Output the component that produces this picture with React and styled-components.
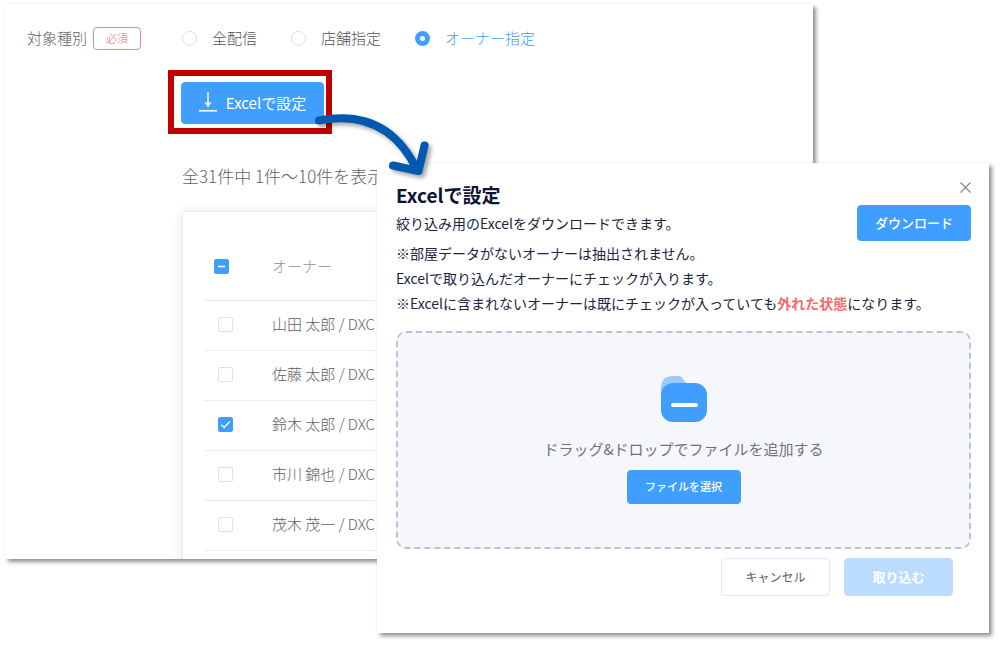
import { useEffect, useRef, useState } from "react";
import styled, { createGlobalStyle } from "styled-components";

const GlobalStyle = createGlobalStyle`
  * {
    box-sizing: border-box;
  }
  body {
    margin: 0;
    background-color: #fff;
    font-family: "Noto Sans CJK JP", "Noto Sans", sans-serif;
    font-size: 15px;
    line-height: 24px;
    color: #606266;
  }
  button, input {
    font-family: inherit;
    margin: 0;
  }
`;

const Container = styled.div`
  position: relative;
  min-height: 100vh;
  padding: 4px 187px 0 5px;
  overflow: hidden;
`;

const Page = styled.main`
  padding: 22px 0 0 22px;
  overflow: hidden;
  background-color: #fff;
  box-shadow: 3px 3px 4px rgba(0, 0, 0, 0.42), 0 0 2px rgba(0, 0, 0, 0.06);
`;

const TargetRow = styled.div`
  display: flex;
  align-items: center;
  height: 24px;
  font-weight: 300;
`;

const TargetLabel = styled.span`
  width: 66px;
`;

const Required = styled.span`
  width: 48px;
  height: 23px;
  margin-right: 41px;
  border: 1px solid #e58a8a;
  border-radius: 4px;
  color: #e06c6c;
  font-size: 11px;
  line-height: 21px;
  text-align: center;
`;

const RadioLabel = styled.label`
  display: flex;
  align-items: center;
  margin-right: 34px;
  color: ${(props) => (props.$active ? "#409eff" : "#505256")};
  font-weight: 300;
  cursor: pointer;
`;

const Radio = styled.input`
  appearance: none;
  width: 15px;
  height: 15px;
  margin-right: 15px;
  border: 1px solid #dcdfe6;
  border-radius: 50%;
  background-color: #fff;

  &:checked {
    border: 5px solid #409eff;
  }
`;

const Content = styled.div`
  margin-left: 141px;
  padding-top: 20px;
`;

const Highlight = styled.div`
  width: fit-content;
  padding: 6px 2px 4px 7px;
  border: 6px solid #c00000;
`;

const Button = styled.button`
  display: flex;
  align-items: center;
  justify-content: center;
  width: ${(props) => props.$width};
  height: ${(props) => props.$height};
  padding: 0 0 2px;
  border: 1px solid ${(props) => (props.$plain ? "#e4e7ed" : "#409eff")};
  border-radius: 4px;
  background-color: ${(props) => (props.$plain ? "#fff" : "#409eff")};
  color: ${(props) => (props.$plain ? "#606266" : "#fff")};
  font-size: ${(props) => props.$size};
  font-weight: ${(props) => props.$weight || 400};
  cursor: pointer;

  &:disabled {
    border-color: #bbdcff;
    background-color: #bbdcff;
    cursor: not-allowed;
  }
`;

const DownloadIcon = styled.svg`
  margin-right: 9px;
`;

const Count = styled.p`
  margin: 30px 0 23px 14px;
  font-size: 17px;
  font-weight: 300;
`;

const Card = styled.div`
  margin-left: 14px;
  margin-right: 20px;
  padding: 0 21px 8px;
  border: 1px solid #ebeef5;
  border-bottom: 0;
  border-radius: 4px 4px 0 0;
  box-shadow: 0 2px 12px rgba(0, 0, 0, 0.12);
`;

const Table = styled.table`
  width: 100%;
  border-collapse: separate;
  border-spacing: 0;
  table-layout: fixed;
  font-weight: 300;
`;

const CheckCol = styled.col`
  width: 68px;
`;

const Th = styled.th`
  height: 89px;
  padding: ${(props) => (props.$check ? "20px 0 0 10px" : "20px 0 0")};
  border-bottom: 1px solid #ebeef5;
  color: #909399;
  font-weight: 300;
  text-align: left;
`;

const Td = styled.td`
  height: 50px;
  padding: ${(props) => (props.$check ? "0 0 2px 14px" : "0 0 3px")};
  border-bottom: 1px solid #ebeef5;
`;

const CheckWrap = styled.span`
  display: grid;
  width: 15px;
  height: 15px;

  & > * {
    grid-area: 1 / 1;
  }

  & > svg {
    pointer-events: none;
  }
`;

const CheckInput = styled.input`
  appearance: none;
  width: 15px;
  height: 15px;
  border: 1px solid #dcdfe6;
  border-radius: 2px;
  background-color: #fff;
  cursor: pointer;

  &:checked,
  &:indeterminate {
    border-color: #409eff;
    background-color: #409eff;
  }
`;

const Modal = styled.section`
  position: absolute;
  top: 163px;
  left: 377px;
  right: 11px;
  padding: 18px 18px 37px 19px;
  background-color: #fff;
  color: #1b2440;
  font-size: 14px;
  line-height: 25px;
  box-shadow: 3px 3px 4px rgba(0, 0, 0, 0.42), 0 0 2px rgba(0, 0, 0, 0.06);
`;

const ModalHead = styled.header`
  display: flex;
  justify-content: space-between;
`;

const Title = styled.h2`
  margin: 0 0 2px;
  color: #0c1530;
  font-size: 19px;
  font-weight: 700;
  line-height: 28px;
`;

const Text = styled.p`
  margin: 0;
`;

const HeadActions = styled.div`
  display: flex;
  flex-direction: column;
  align-items: flex-end;
  gap: 10px;
`;

const CloseButton = styled.button`
  display: flex;
  padding: 0;
  border: 0;
  background: none;
  cursor: pointer;
`;

const Danger = styled.strong`
  color: #f56c6c;
  font-weight: 700;
`;

const DropZone = styled.div`
  display: flex;
  flex-direction: column;
  align-items: center;
  margin: 15px 0 9px;
  padding: 43px 0;
  border: 2px dashed #b8c5d8;
  border-radius: 10px;
  background-color: #f5f7fb;
`;

const DropText = styled.p`
  margin: 14px 0 9px;
  color: #707379;
  font-size: 15px;
`;

const ModalFooter = styled.footer`
  display: flex;
  justify-content: flex-end;
  gap: 14px;
  padding-right: 18px;
`;

const Arrow = styled.svg`
  position: absolute;
  top: 104px;
  left: 307px;
  filter: drop-shadow(3px 3px 2px rgba(0, 0, 0, 0.35));
  pointer-events: none;
`;

const targets = ["全配信", "店舗指定", "オーナー指定"];

const owners = [
  "山田 太郎 / DXC",
  "佐藤 太郎 / DXC",
  "鈴木 太郎 / DXC",
  "市川 錦也 / DXC",
  "茂木 茂一 / DXC",
];

const Checkbox = ({ label, checked, indeterminate, onChange }) => {
  const ref = useRef(null);

  useEffect(() => {
    ref.current.indeterminate = !!indeterminate;
  }, [indeterminate]);

  return (
    <CheckWrap>
      <CheckInput
        ref={ref}
        type="checkbox"
        aria-label={label}
        checked={checked}
        onChange={onChange}
      />
      <svg width="15" height="15" fill="none" stroke="#fff" strokeWidth="1.3">
        {indeterminate && <path d="M4 7.5h7" strokeWidth="1.6" />}
        {checked && !indeterminate && <path d="M3.2 7.6l3 2.9 5.6-6" />}
      </svg>
    </CheckWrap>
  );
};

const App = () => {
  const [target, setTarget] = useState("オーナー指定");
  const [selected, setSelected] = useState([2]);

  const toggle = (index) => {
    setSelected(
      selected.includes(index)
        ? selected.filter((i) => i !== index)
        : [...selected, index]
    );
  };

  const all = selected.length === owners.length;

  return (
    <Container>
      <GlobalStyle />
      <Page>
        <TargetRow role="radiogroup" aria-label="対象種別">
          <TargetLabel>対象種別</TargetLabel>
          <Required>必須</Required>
          {targets.map((item) => (
            <RadioLabel key={item} $active={target === item}>
              <Radio
                type="radio"
                name="target"
                checked={target === item}
                onChange={() => setTarget(item)}
              />
              {item}
            </RadioLabel>
          ))}
        </TargetRow>
        <Content>
          <Highlight>
            <Button $width="143px" $height="42px" $size="15px">
              <DownloadIcon width="18" height="20" fill="none" stroke="#f3efea">
                <path d="M9 0v14" strokeWidth="1.6" />
                <path d="M5.5 10.5h7L9 15.5z" fill="#f3efea" stroke="none" />
                <path d="M0 18.8h18" strokeWidth="1.8" />
              </DownloadIcon>
              Excelで設定
            </Button>
          </Highlight>
          <Count>全31件中 1件～10件を表示</Count>
          <Card>
            <Table>
              <colgroup>
                <CheckCol />
                <col />
              </colgroup>
              <thead>
                <tr>
                  <Th $check>
                    <Checkbox
                      label="すべて選択"
                      checked={all}
                      indeterminate={selected.length > 0 && !all}
                      onChange={() =>
                        setSelected(all ? [] : owners.map((_, i) => i))
                      }
                    />
                  </Th>
                  <Th>オーナー</Th>
                </tr>
              </thead>
              <tbody>
                {owners.map((owner, i) => (
                  <tr key={owner}>
                    <Td $check>
                      <Checkbox
                        label={owner}
                        checked={selected.includes(i)}
                        onChange={() => toggle(i)}
                      />
                    </Td>
                    <Td>{owner}</Td>
                  </tr>
                ))}
              </tbody>
            </Table>
          </Card>
        </Content>
      </Page>
      <Modal role="dialog" aria-labelledby="modal-title">
        <ModalHead>
          <div>
            <Title id="modal-title">Excelで設定</Title>
            <Text>絞り込み用のExcelをダウンロードできます。</Text>
          </div>
          <HeadActions>
            <CloseButton aria-label="閉じる">
              <svg width="11" height="14" fill="none" stroke="#85888e">
                <path d="M0.5 1.5l10 10M10.5 1.5l-10 10" strokeWidth="1.2" />
              </svg>
            </CloseButton>
            <Button $width="114px" $height="36px" $size="13px" $weight="500">
              ダウンロード
            </Button>
          </HeadActions>
        </ModalHead>
        <Text>※部屋データがないオーナーは抽出されません。</Text>
        <Text>Excelで取り込んだオーナーにチェックが入ります。</Text>
        <Text>
          ※Excelに含まれないオーナーは既にチェックが入っていても
          <Danger>外れた状態</Danger>になります。
        </Text>
        <DropZone>
          <svg width="46" height="46">
            <path
              d="M0 22V12C0 4 4 0 12 0h5c6 0 5 7 11 8v14z"
              fill="#9accff"
            />
            <rect y="7" width="46" height="39" rx="12" fill="#409eff" />
            <path
              d="M12 29h23"
              stroke="#fff"
              strokeWidth="4"
              strokeLinecap="round"
            />
          </svg>
          <DropText>ドラッグ&ドロップでファイルを追加する</DropText>
          <Button $width="114px" $height="34px" $size="11px" $weight="500">
            ファイルを選択
          </Button>
        </DropZone>
        <ModalFooter>
          <Button $plain $width="109px" $height="38px" $size="12px">
            キャンセル
          </Button>
          <Button
            disabled
            $width="109px"
            $height="38px"
            $size="13px"
            $weight="700"
          >
            取り込む
          </Button>
        </ModalFooter>
      </Modal>
      <Arrow
        width="130"
        height="80"
        fill="none"
        stroke="#0059ae"
        strokeWidth="8"
        strokeLinecap="round"
        strokeLinejoin="round"
      >
        <path d="M12 16.500C52 9 88 20 110 66" />
        <path d="M86 61.500L111.500 67L117.500 41.500" />
      </Arrow>
    </Container>
  );
};

export default App;
